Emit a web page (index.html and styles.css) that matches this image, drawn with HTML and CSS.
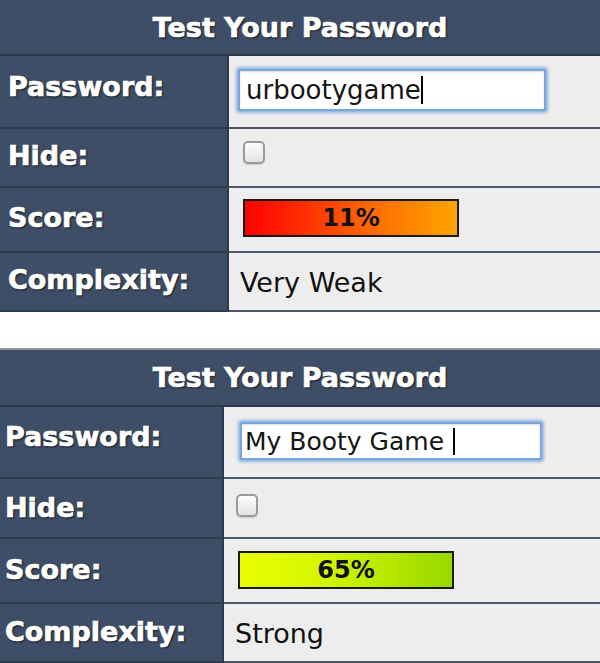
FILE: index.html
```html
<!DOCTYPE html>
<html>
<head>
<meta charset="utf-8">
<title>Test Your Password</title>
<link rel="stylesheet" href="styles.css">
</head>
<body>
<div class="page">
  <section class="panel panel-a">
    <div class="head">Test Your Password</div>
    <div class="row row-pass">
      <div class="lbl">Password:</div>
      <div class="val">
        <div class="field"><span class="ftext">urbootygame</span><span class="caret"></span></div>
      </div>
    </div>
    <div class="row row-hide">
      <div class="lbl">Hide:</div>
      <div class="val"><span class="check"></span></div>
    </div>
    <div class="row row-score">
      <div class="lbl">Score:</div>
      <div class="val"><div class="bar bar-weak">11%</div></div>
    </div>
    <div class="row row-cx">
      <div class="lbl">Complexity:</div>
      <div class="val"><span class="vtext">Very Weak</span></div>
    </div>
  </section>

  <section class="panel panel-b">
    <div class="head">Test Your Password</div>
    <div class="row row-pass">
      <div class="lbl">Password:</div>
      <div class="val">
        <div class="field"><span class="ftext">My Booty Game </span><span class="caret"></span></div>
      </div>
    </div>
    <div class="row row-hide">
      <div class="lbl">Hide:</div>
      <div class="val"><span class="check"></span></div>
    </div>
    <div class="row row-score">
      <div class="lbl">Score:</div>
      <div class="val"><div class="bar bar-strong">65%</div></div>
    </div>
    <div class="row row-cx">
      <div class="lbl">Complexity:</div>
      <div class="val"><span class="vtext">Strong</span></div>
    </div>
  </section>
</div>
</body>
</html>
```
FILE: styles.css
```css
html, body {
  margin: 0;
  padding: 0;
  background: #ffffff;
}
body {
  font-family: "DejaVu Sans", Verdana, sans-serif;
  overflow: hidden;
}
.page {
  width: 600px;
  display: flex;
  flex-direction: column;
  gap: 36px;
}
.panel {
  width: 600px;
  background: #3e4e66;
}
.panel-b {
  border-top: 2px solid #8e97a3;
}
.head {
  height: 54px;
  border-bottom: 2px solid #2c394c;
  color: #fff;
  font-weight: bold;
  font-size: 27px;
  display: flex;
  align-items: center;
  justify-content: center;
  -webkit-text-stroke: 0.7px #fff;
  text-shadow: 1px 1px 2px rgba(0,0,0,0.9);
}
.panel-b .head { height: 55px; }
.row {
  display: grid;
  grid-template-columns: 229px 1fr;
}
.panel-b .row { grid-template-columns: 224px 1fr; }
.lbl {
  background: #3e4e66;
  border-right: 2px solid #2d3a4d;
  border-bottom: 2px solid #2f3c50;
  color: #fff;
  font-weight: bold;
  font-size: 27px;
  padding-left: 8px;
  padding-bottom: 5px;
  display: flex;
  align-items: center;
  -webkit-text-stroke: 0.7px #fff;
  text-shadow: 1px 1px 2px rgba(0,0,0,0.9);
}
.panel-b .lbl { padding-left: 5px; padding-bottom: 2px; }
.val {
  background: #ededed;
  border-bottom: 2px solid #4d5767;
  display: flex;
  align-items: center;
  padding-left: 11px;
  color: #111;
  font-size: 27px;
}
.panel-b .val { padding-left: 11px; }

.row-pass .lbl { padding-bottom: 11px; }
.panel-a .row-pass { height: 73px; }
.panel-a .row-hide { height: 59px; }
.panel-a .row-score { height: 65px; }
.panel-a .row-cx { height: 59px; }
.panel-b .row-pass { height: 72px; }
.panel-b .row-hide { height: 60px; }
.panel-b .row-score { height: 65px; }
.panel-b .row-cx { height: 59px; }

.field {
  box-sizing: border-box;
  width: 308px;
  height: 42px;
  margin-left: -2px;
  margin-bottom: 4px;
  background: #fff;
  border: 2px solid #79a6db;
  border-radius: 2px;
  box-shadow: 0 0 3px 2px rgba(110,160,220,0.75), inset 0 1px 2px rgba(0,0,0,0.15);
  display: flex;
  align-items: center;
  padding-left: 6px;
  font-size: 26px;
  color: #151515;
}
.panel-b .field {
  width: 302px;
  height: 38px;
  margin-left: 5px;
  margin-bottom: 2px;
  padding-left: 3px;
  font-size: 25px;
}
.ftext { white-space: pre; }
.caret {
  display: inline-block;
  width: 2px;
  height: 28px;
  background: #000;
}
.panel-b .caret { height: 27px; margin-left: 1px; }

.check {
  box-sizing: border-box;
  width: 22px;
  height: 23px;
  margin-left: 3px;
  margin-bottom: 10px;
  border: 2px solid #9a9a9a;
  border-radius: 5px;
  background: linear-gradient(#fdfdfd, #e3e3e3);
  box-shadow: 0 1px 1px rgba(0,0,0,0.15);
}
.panel-b .check { margin-left: 1px; margin-bottom: 6px; }

.bar {
  box-sizing: border-box;
  width: 216px;
  height: 38px;
  margin-left: 1px;
  margin-bottom: 4px;
  border: 2px solid #1a1a1a;
  display: flex;
  align-items: center;
  justify-content: center;
  font-weight: bold;
  font-size: 24px;
  color: #111;
}
.panel-a .bar { margin-left: 3px; }
.panel-b .bar { margin-left: 3px; margin-bottom: 2px; }
.bar-weak {
  background: linear-gradient(to right, #ff0000 0%, #ff2a00 25%, #ff6a00 60%, #ffa500 100%);
}
.bar-strong {
  background: linear-gradient(to right, #eaff00 0%, #d4f500 40%, #a6e000 85%, #98d800 100%);
}
.vtext { padding-top: 2px; }
```
